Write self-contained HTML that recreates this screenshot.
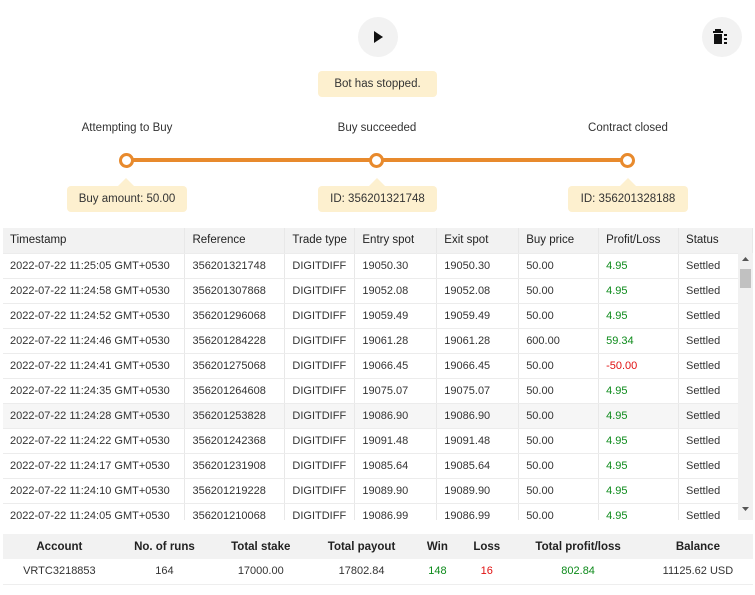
<!DOCTYPE html>
<html><head><style>
*{box-sizing:border-box;margin:0;padding:0}
body{width:755px;height:595px;background:#fff;font-family:"Liberation Sans",Arial,sans-serif;font-size:11px;color:#333;position:relative;overflow:hidden}
.circ{position:absolute;width:40px;height:40px;border-radius:50%;background:#f2f2f2}
.tip{position:absolute;background:#fdf0cf;border-radius:4px;height:26px;line-height:26px;text-align:center;font-size:11.5px;color:#333}
.lbl{position:absolute;font-size:11.5px;color:#333;text-align:center;width:160px}
.dot{position:absolute;width:15px;height:15px;border-radius:50%;border:3px solid #e88a2d;background:#fff;top:153px}
.arrow{position:absolute;width:0;height:0;border-left:8px solid transparent;border-right:8px solid transparent;border-bottom:8px solid #fdf0cf;top:178px}
.tw{position:absolute;left:3px;top:228px;width:750px;height:292px;overflow:hidden}
table{border-collapse:collapse;font-size:11px}
td,th{height:25px;padding:0 7px;border-right:1px solid #e8e8e8;border-bottom:1px solid #ececec;white-space:nowrap;text-align:left}
th{background:#f2f2f2;font-weight:normal;color:#222;font-size:11.5px}
.g{color:#0c8a1a}.r{color:#e01010}
.sb{position:absolute;left:738px;top:253px;width:15px;height:267px;background:#f1f1f1}
.sum{position:absolute;left:3px;top:534px;width:750px}
.sum td,.sum th{border:none;text-align:center;height:25px}
.sum th{font-weight:bold;background:#f2f2f2}
</style></head><body>
<div class="circ" style="left:358px;top:17px"><svg width="40" height="40"><path d="M16 14 L25 20 L16 26Z" fill="#111"/></svg></div>
<div class="circ" style="left:702px;top:17px"><svg width="40" height="40"><rect x="13" y="12" width="6" height="2" fill="#111"/><rect x="11" y="14" width="10" height="2" fill="#111"/><rect x="12" y="17" width="8" height="10" fill="#111"/><rect x="22" y="17" width="3" height="2" fill="#111"/><rect x="22" y="21" width="3" height="2" fill="#111"/><rect x="22" y="25" width="3" height="2" fill="#111"/></svg></div>
<div class="tip" style="left:318px;top:71px;width:119px">Bot has stopped.</div>
<div class="lbl" style="left:47px;top:122px">Attempting to Buy</div>
<div class="lbl" style="left:297px;top:122px">Buy succeeded</div>
<div class="lbl" style="left:548px;top:122px">Contract closed</div>
<div style="position:absolute;left:126px;top:158px;width:502px;height:4px;background:#e88a2d"></div>
<div class="dot" style="left:119px"></div>
<div class="dot" style="left:369px"></div>
<div class="dot" style="left:620px"></div>
<div class="arrow" style="left:118px"></div>
<div class="arrow" style="left:369px"></div>
<div class="arrow" style="left:620px"></div>
<div class="tip" style="left:67px;top:186px;width:120px">Buy amount: 50.00</div>
<div class="tip" style="left:318px;top:186px;width:119px">ID: 356201321748</div>
<div class="tip" style="left:568px;top:186px;width:120px">ID: 356201328188</div>
<div class="tw"><table>
<tr><th style="width:182px">Timestamp</th><th style="width:100px">Reference</th><th style="width:70px">Trade type</th><th style="width:82px">Entry spot</th><th style="width:82px">Exit spot</th><th style="width:80px">Buy price</th><th style="width:80px">Profit/Loss</th><th style="width:74px">Status</th></tr>
<tr><td>2022-07-22 11:25:05 GMT+0530</td><td>356201321748</td><td>DIGITDIFF</td><td>19050.30</td><td>19050.30</td><td>50.00</td><td class="g">4.95</td><td>Settled</td></tr>
<tr><td>2022-07-22 11:24:58 GMT+0530</td><td>356201307868</td><td>DIGITDIFF</td><td>19052.08</td><td>19052.08</td><td>50.00</td><td class="g">4.95</td><td>Settled</td></tr>
<tr><td>2022-07-22 11:24:52 GMT+0530</td><td>356201296068</td><td>DIGITDIFF</td><td>19059.49</td><td>19059.49</td><td>50.00</td><td class="g">4.95</td><td>Settled</td></tr>
<tr><td>2022-07-22 11:24:46 GMT+0530</td><td>356201284228</td><td>DIGITDIFF</td><td>19061.28</td><td>19061.28</td><td>600.00</td><td class="g">59.34</td><td>Settled</td></tr>
<tr><td>2022-07-22 11:24:41 GMT+0530</td><td>356201275068</td><td>DIGITDIFF</td><td>19066.45</td><td>19066.45</td><td>50.00</td><td class="r">-50.00</td><td>Settled</td></tr>
<tr><td>2022-07-22 11:24:35 GMT+0530</td><td>356201264608</td><td>DIGITDIFF</td><td>19075.07</td><td>19075.07</td><td>50.00</td><td class="g">4.95</td><td>Settled</td></tr>
<tr style="background:#f6f6f6"><td>2022-07-22 11:24:28 GMT+0530</td><td>356201253828</td><td>DIGITDIFF</td><td>19086.90</td><td>19086.90</td><td>50.00</td><td class="g">4.95</td><td>Settled</td></tr>
<tr><td>2022-07-22 11:24:22 GMT+0530</td><td>356201242368</td><td>DIGITDIFF</td><td>19091.48</td><td>19091.48</td><td>50.00</td><td class="g">4.95</td><td>Settled</td></tr>
<tr><td>2022-07-22 11:24:17 GMT+0530</td><td>356201231908</td><td>DIGITDIFF</td><td>19085.64</td><td>19085.64</td><td>50.00</td><td class="g">4.95</td><td>Settled</td></tr>
<tr><td>2022-07-22 11:24:10 GMT+0530</td><td>356201219228</td><td>DIGITDIFF</td><td>19089.90</td><td>19089.90</td><td>50.00</td><td class="g">4.95</td><td>Settled</td></tr>
<tr><td>2022-07-22 11:24:05 GMT+0530</td><td>356201210068</td><td>DIGITDIFF</td><td>19086.99</td><td>19086.99</td><td>50.00</td><td class="g">4.95</td><td>Settled</td></tr>
</table></div>
<div class="sb"><svg width="15" height="267"><path d="M4 8 L11 8 L7.5 4Z" fill="#555"/><rect x="2" y="16" width="11" height="19" fill="#c1c1c1"/><path d="M4 254 L11 254 L7.5 258Z" fill="#555"/></svg></div>
<div class="sum"><table style="width:750px">
<tr><th>Account</th><th>No. of runs</th><th>Total stake</th><th>Total payout</th><th>Win</th><th>Loss</th><th>Total profit/loss</th><th>Balance</th></tr>
<tr style="border-bottom:1px solid #eee"><td>VRTC3218853</td><td>164</td><td>17000.00</td><td>17802.84</td><td class="g">148</td><td class="r">16</td><td class="g">802.84</td><td>11125.62 USD</td></tr>
</table></div>
</body></html>
